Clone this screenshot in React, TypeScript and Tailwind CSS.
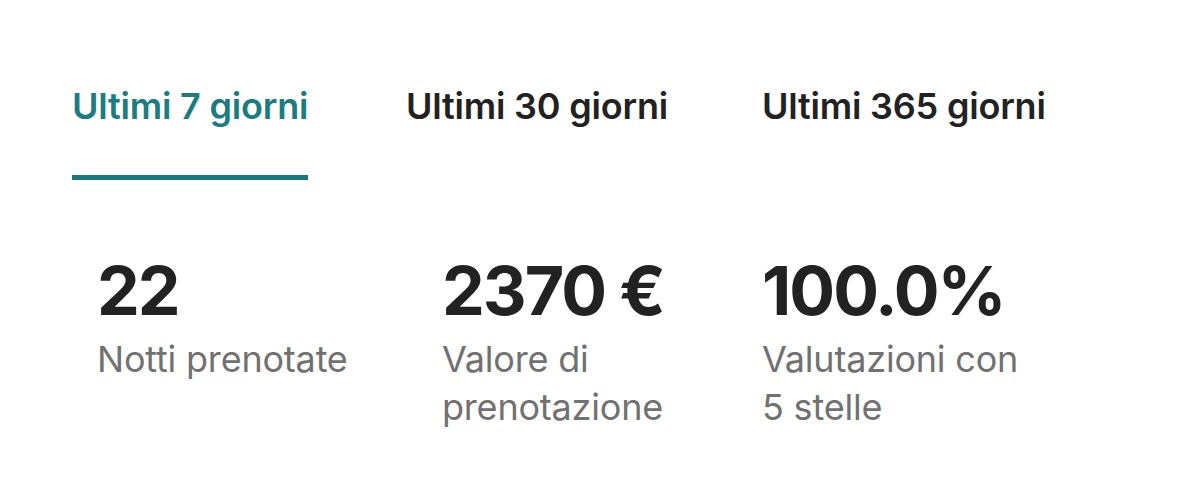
const tabs = ["Ultimi 7 giorni", "Ultimi 30 giorni", "Ultimi 365 giorni"];

const stats = [
  { value: "22", label: ["Notti prenotate"], width: "w-[345px]" },
  { value: "2370 €", label: ["Valore di", "prenotazione"], width: "w-[320px]" },
  { value: "100.0%", label: ["Valutazioni con", "5 stelle"], width: "w-[300px]" },
];

const tabWidths = ["w-[334px]", "w-[356px]", "w-[300px]"];

export default function App() {
  return (
    <div className="w-[1179px] h-[504px] bg-white font-['Inter',sans-serif] overflow-hidden">
      <div className="flex pl-[72px] pt-[85px]">
        {tabs.map((tab, i) => (
          <div key={tab} className={tabWidths[i]}>
            <div
              className={
                "inline-flex flex-col " +
                (i === 0 ? "text-[#1a7d81]" : "text-[#222222]")
              }
            >
              <span className="text-[36px] leading-[42px] font-semibold tracking-[-0.2px] whitespace-nowrap">
                {tab}
              </span>
              <div
                className={
                  "mt-[48px] h-[5px] " + (i === 0 ? "bg-[#17797d]" : "bg-transparent")
                }
              />
            </div>
          </div>
        ))}
      </div>

      <div className="flex pl-[97px] pt-[72px]">
        {stats.map((s) => (
          <div key={s.value} className={s.width}>
            <div className="text-[68px] leading-[76px] font-bold text-[#222222] tracking-[-2px] whitespace-nowrap">
              {s.value}
            </div>
            <div className="mt-[7px] text-[36px] leading-[48px] text-[#717171] tracking-[-0.2px]">
              {s.label.map((l) => (
                <div key={l} className="whitespace-nowrap">
                  {l}
                </div>
              ))}
            </div>
          </div>
        ))}
      </div>
    </div>
  );
}
